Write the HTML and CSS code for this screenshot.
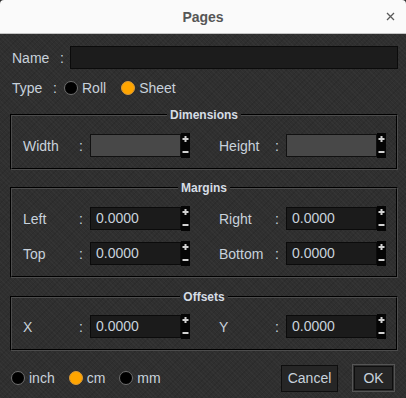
FILE: index.html
```html
<!DOCTYPE html>
<html>
<head>
<meta charset="utf-8">
<link rel="stylesheet" href="styles.css">
</head>
<body>
<div class="window">
  <header class="titlebar">
    <span></span>
    <span class="title">Pages</span>
    <svg class="close" width="9" height="9" viewBox="0 0 9 9"><path d="M1 1L8 8M8 1L1 8" stroke="#5a5a5a" stroke-width="1.3"/></svg>
  </header>
  <main class="content">
    <div class="name-row">
      <span class="lbl name-lbl">Name</span><span class="colon">:</span>
      <div class="field name-field"></div>
    </div>
    <div class="type-row">
      <span class="lbl type-lbl">Type</span><span class="colon type-colon">:</span>
      <span class="radio"><span class="dot"></span>Roll</span>
      <span class="radio"><span class="dot on"></span>Sheet</span>
    </div>

    <fieldset class="group dims">
      <legend>Dimensions</legend>
      <div class="row">
        <div class="pair"><span class="lbl">Width</span><span class="colon">:</span><div class="field off"></div><svg class="spin" width="9" height="25" viewBox="0 0 9 25"><rect width="9" height="25" fill="#050505"/><path d="M4.5 3V9M1.5 6H7.5M1.5 19H7.5" stroke="#d2d2d2" stroke-width="2"/></svg></div>
        <div class="pair"><span class="lbl">Height</span><span class="colon">:</span><div class="field off"></div><svg class="spin" width="9" height="25" viewBox="0 0 9 25"><rect width="9" height="25" fill="#050505"/><path d="M4.5 3V9M1.5 6H7.5M1.5 19H7.5" stroke="#d2d2d2" stroke-width="2"/></svg></div>
      </div>
    </fieldset>

    <fieldset class="group margins">
      <legend>Margins</legend>
      <div class="row">
        <div class="pair"><span class="lbl">Left</span><span class="colon">:</span><div class="field">0.0000</div><svg class="spin" width="9" height="25" viewBox="0 0 9 25"><rect width="9" height="25" fill="#050505"/><path d="M4.5 3V9M1.5 6H7.5M1.5 19H7.5" stroke="#d2d2d2" stroke-width="2"/></svg></div>
        <div class="pair"><span class="lbl">Right</span><span class="colon">:</span><div class="field">0.0000</div><svg class="spin" width="9" height="25" viewBox="0 0 9 25"><rect width="9" height="25" fill="#050505"/><path d="M4.5 3V9M1.5 6H7.5M1.5 19H7.5" stroke="#d2d2d2" stroke-width="2"/></svg></div>
      </div>
      <div class="row">
        <div class="pair"><span class="lbl">Top</span><span class="colon">:</span><div class="field">0.0000</div><svg class="spin" width="9" height="25" viewBox="0 0 9 25"><rect width="9" height="25" fill="#050505"/><path d="M4.5 3V9M1.5 6H7.5M1.5 19H7.5" stroke="#d2d2d2" stroke-width="2"/></svg></div>
        <div class="pair"><span class="lbl">Bottom</span><span class="colon">:</span><div class="field">0.0000</div><svg class="spin" width="9" height="25" viewBox="0 0 9 25"><rect width="9" height="25" fill="#050505"/><path d="M4.5 3V9M1.5 6H7.5M1.5 19H7.5" stroke="#d2d2d2" stroke-width="2"/></svg></div>
      </div>
    </fieldset>

    <fieldset class="group offsets">
      <legend>Offsets</legend>
      <div class="row">
        <div class="pair"><span class="lbl">X</span><span class="colon">:</span><div class="field">0.0000</div><svg class="spin" width="9" height="25" viewBox="0 0 9 25"><rect width="9" height="25" fill="#050505"/><path d="M4.5 3V9M1.5 6H7.5M1.5 19H7.5" stroke="#d2d2d2" stroke-width="2"/></svg></div>
        <div class="pair"><span class="lbl">Y</span><span class="colon">:</span><div class="field">0.0000</div><svg class="spin" width="9" height="25" viewBox="0 0 9 25"><rect width="9" height="25" fill="#050505"/><path d="M4.5 3V9M1.5 6H7.5M1.5 19H7.5" stroke="#d2d2d2" stroke-width="2"/></svg></div>
      </div>
    </fieldset>

    <div class="footer">
      <span class="radio"><span class="dot"></span>inch</span>
      <span class="radio"><span class="dot on"></span>cm</span>
      <span class="radio"><span class="dot"></span>mm</span>
      <span class="btn cancel">Cancel</span>
      <span class="btn ok">OK</span>
    </div>
  </main>
</div>
</body>
</html>
```
FILE: styles.css
```css
html {
  background: #2b2b2b;
}
body {
  margin: 0;
  font-family: "Liberation Sans", Arial, sans-serif;
  font-size: 14px;
  color: #c8d2dc;
}
.window {
  width: 406px;
  height: 398px;
  display: flex;
  flex-direction: column;
  overflow: hidden;
}
.titlebar {
  flex-shrink: 0;
  height: 33px;
  background: #fafafa;
  border-bottom: 1px solid #c4c4c4;
  border-radius: 4px 4px 0 0;
  display: grid;
  grid-template-columns: 1fr auto 1fr;
  align-items: center;
}
.title {
  font-weight: bold;
  font-size: 14px;
  color: #565656;
}
.close {
  justify-self: end;
  margin-right: 11px;
}
.content {
  flex: 1;
  min-height: 0;
  padding: 12px 8px 0 10px;
  background-color: #2f2f2f;
  background-image:
    repeating-linear-gradient(45deg, rgba(255,255,255,0.025) 0 1px, transparent 1px 3px),
    repeating-linear-gradient(-45deg, rgba(0,0,0,0.09) 0 1px, transparent 1px 4px);
}
.lbl {
  display: inline-block;
}
.colon {
  display: inline-block;
}
.name-row {
  display: flex;
  align-items: center;
  height: 23px;
}
.name-lbl {
  width: 48px;
  padding-left: 2px;
}
.name-row .colon {
  width: 10px;
}
.field {
  box-sizing: border-box;
  height: 23px;
  background: #1b1b1b;
  border: 1px solid #0b0b0b;
  padding-left: 5px;
  line-height: 21px;
  color: #c8d2dc;
}
.field.off {
  background: #484848;
  border-color: #111;
}
.name-field {
  flex: 1;
  background: #1c1c1c;
}
.type-row {
  margin-top: 9px;
  height: 20px;
  display: flex;
  align-items: center;
}
.type-lbl {
  width: 41px;
  padding-left: 2px;
}
.type-colon {
  width: 11px;
}
.radio {
  display: inline-flex;
  align-items: center;
  gap: 4px;
  margin-right: 15px;
}
.dot {
  box-sizing: border-box;
  width: 14px;
  height: 14px;
  border-radius: 50%;
  background: #000;
  border: 1px solid #6e6e6e;
}
.dot.on {
  background: #ffa500;
  border-color: #d99a3a;
}
.group {
  margin: 0;
  padding: 0 11px 10px 11px;
  border: 2px groove #4c4c4c;
  min-width: 0;
}
.group legend {
  margin: 0 auto;
  padding: 0 3px;
  font-size: 12px;
  line-height: 16px;
  font-weight: bold;
  color: #d6dde5;
}
.dims {
  margin-top: 9px;
  padding-top: 10px;
}
.margins {
  margin-top: 10px;
  padding-top: 10px;
}
.offsets {
  margin-top: 11px;
  padding-top: 9px;
}
.row {
  display: flex;
  gap: 29px;
  height: 25px;
}
.row + .row {
  margin-top: 10px;
}
.pair {
  display: grid;
  grid-template-columns: 56px 11px 91px 9px;
  align-items: center;
}
.spin {
  display: block;
}
.footer {
  margin-top: 13px;
  height: 28px;
  display: flex;
  align-items: center;
  padding-left: 1px;
}
.footer .radio {
  margin-right: 14px;
}
.btn {
  box-sizing: border-box;
  display: flex;
  align-items: center;
  justify-content: center;
  background: #262626;
  color: #c8d2dc;
}
.cancel {
  margin-left: auto;
  width: 57px;
  height: 27px;
  border: 1px solid #0e0e0e;
}
.ok {
  margin-left: 14px;
  margin-right: 3px;
  width: 43px;
  height: 28px;
  border: 1px solid #555;
  box-shadow: inset 0 0 0 1px #2e2e2e, inset 0 0 0 2px #0e0e0e;
}
```
